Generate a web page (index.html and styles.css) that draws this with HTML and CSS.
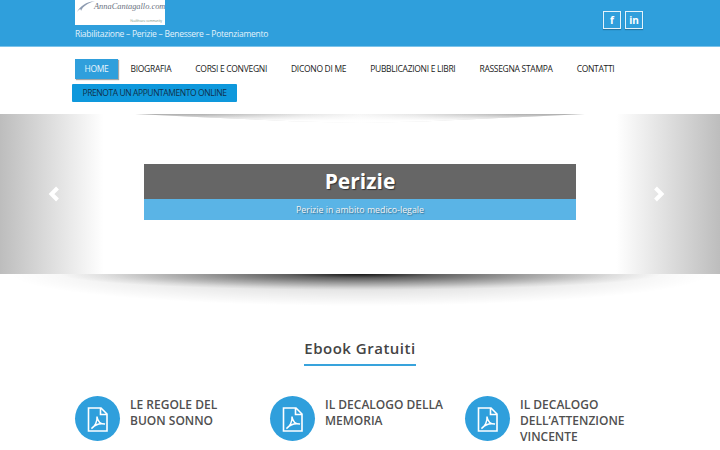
FILE: index.html
```html
<!DOCTYPE html>
<html lang="it">
<head>
  <meta charset="UTF-8">
  <meta name="viewport" content="width=device-width, initial-scale=1.0">
  <title>Anna Cantagallo</title>
  <link rel="stylesheet" href="styles.css">
</head>
<body>
  <!-- Top bar -->
  <header class="topbar">
    <div class="container topbar-inner">
      <div>
        <a class="logo" href="#">
          <svg class="logo-swoosh" width="20" height="13" viewBox="0 0 20 13">
            <path d="M1 12 C4 6 10 2 19 1 C12 3 7 6 5 11 C5 8 3 9 1 12 Z" fill="#8d9bb0"/>
          </svg>
          <span class="logo-name">AnnaCantagallo.com</span>
          <span class="logo-small">Healthcare community</span>
        </a>
        <p class="tagline">Riabilitazione – Perizie – Benessere – Potenziamento</p>
      </div>
      <div class="social">
        <a class="social-btn" href="#">f</a>
        <a class="social-btn" href="#">in</a>
      </div>
    </div>
  </header>

  <!-- Menu -->
  <nav class="container menu">
    <ul class="menu-list">
      <li><a class="menu-link active" href="#">Home</a></li>
      <li><a class="menu-link" href="#">Biografia</a></li>
      <li><a class="menu-link" href="#">Corsi e convegni</a></li>
      <li><a class="menu-link" href="#">Dicono di me</a></li>
      <li><a class="menu-link" href="#">Pubblicazioni e libri</a></li>
      <li><a class="menu-link" href="#">Rassegna stampa</a></li>
      <li><a class="menu-link" href="#">Contatti</a></li>
    </ul>
    <a class="booking" href="#">Prenota un appuntamento online</a>
  </nav>

  <!-- Slider -->
  <section class="slider">
    <div class="slider-control left">
      <svg width="12" height="16" viewBox="0 0 12 16"><polyline points="9.5,2 3.5,8 9.5,14" fill="none" stroke="#fff" stroke-width="4"/></svg>
    </div>
    <div class="caption">
      <h2 class="caption-title">Perizie</h2>
      <p class="caption-text">Perizie in ambito medico-legale</p>
    </div>
    <div class="slider-control right">
      <svg width="12" height="16" viewBox="0 0 12 16"><polyline points="2.5,2 8.5,8 2.5,14" fill="none" stroke="#fff" stroke-width="4"/></svg>
    </div>
  </section>

  <!-- Ebook -->
  <section class="container ebooks">
    <div class="section-head">
      <h2 class="section-title">Ebook Gratuiti</h2>
    </div>
    <div class="ebook-grid">
      <div class="ebook">
        <span class="ebook-icon">
          <svg width="24" height="26" viewBox="0 0 24 26"><use href="#pdf"/></svg>
        </span>
        <h3 class="ebook-title">Le regole del buon sonno</h3>
      </div>
      <div class="ebook">
        <span class="ebook-icon">
          <svg width="24" height="26" viewBox="0 0 24 26"><use href="#pdf"/></svg>
        </span>
        <h3 class="ebook-title">Il decalogo della memoria</h3>
      </div>
      <div class="ebook">
        <span class="ebook-icon">
          <svg width="24" height="26" viewBox="0 0 24 26"><use href="#pdf"/></svg>
        </span>
        <h3 class="ebook-title">Il decalogo dell’attenzione vincente</h3>
      </div>
    </div>
  </section>

  <svg class="sprite" width="0" height="0">
    <symbol id="pdf" viewBox="0 0 24 26">
      <path d="M2.5 2 H15 L21 8 V25 H2.5 Z M14.5 2 V8.5 H21" fill="none" stroke="#fff" stroke-width="1.6"/>
      <path d="M5.5 22.5 C9 20.5 11.5 15 11 10.5 C11.5 15 14 18 19 18 C14 17 9 18.5 5.5 22.5 Z" fill="none" stroke="#fff" stroke-width="1.5"/>
    </symbol>
  </svg>
</body>
</html>
```

FILE: styles.css
```css
html, body {
  height: 450px;
  overflow: hidden;
}

body {
  font-family: "Open Sans", sans-serif;
  color: #444;
  background-color: #ffffff;
  margin: 0;
  padding: 0;
}

.container {
  width: 570px;
  margin: 0 auto;
}

/* Top bar */
.topbar {
  height: 46px;
  background-color: #2f9fdc;
  border-bottom: 1px solid #7cc3ea;
}

.topbar-inner {
  display: flex;
  justify-content: space-between;
  align-items: flex-start;
}

.logo {
  position: relative;
  display: block;
  width: 90px;
  height: 25px;
  background: #ffffff;
  text-decoration: none;
  overflow: hidden;
}

.logo-swoosh {
  position: absolute;
  left: 1px;
  top: 0;
}

.logo-name {
  position: absolute;
  left: 19px;
  top: 1px;
  font-family: "Liberation Serif", serif;
  font-style: italic;
  font-size: 8.4px;
  line-height: 12px;
  color: #6b7280;
  white-space: nowrap;
}

.logo-small {
  position: absolute;
  right: 3px;
  top: 19px;
  font-size: 3px;
  line-height: 5px;
  color: #6f8a78;
  white-space: nowrap;
}

.tagline {
  margin: 3px 0 0;
  font-size: 8.5px;
  line-height: 12px;
  letter-spacing: -0.26px;
  color: #e2f2fb;
}

.social {
  display: flex;
  gap: 4px;
  margin: 11px 2px 0 0;
}

.social-btn {
  display: flex;
  align-items: center;
  justify-content: center;
  box-sizing: border-box;
  width: 18px;
  height: 18px;
  border: 1px solid #e4f3fb;
  box-shadow: 0 1px 1px rgba(0, 0, 0, 0.25);
  color: #ffffff;
  font-size: 10px;
  font-weight: 700;
  text-decoration: none;
}

/* Menu */
.menu {
  height: 67px;
  padding-top: 12px;
  box-sizing: border-box;
}

.menu-list {
  display: flex;
  margin: 0;
  padding: 0;
  list-style: none;
}

.menu-link {
  display: block;
  height: 20px;
  margin-right: 3px;
  padding: 0 10.5px;
  font-size: 8.5px;
  line-height: 20px;
  letter-spacing: -0.3px;
  color: #222;
  text-transform: uppercase;
  text-decoration: none;
  white-space: nowrap;
}

.menu-link.active {
  margin-right: 2px;
  padding: 0 9.5px;
  background-color: #2f9fdc;
  color: #e8f5fc;
  box-shadow: 1px 1px 1px rgba(0, 0, 0, 0.35);
}

.booking {
  display: block;
  width: 165px;
  height: 18px;
  margin: 5px 0 0 -3px;
  border-radius: 1px;
  background-color: #0e98dc;
  font-size: 8.5px;
  line-height: 18px;
  letter-spacing: -0.42px;
  text-align: center;
  text-transform: uppercase;
  text-decoration: none;
  color: #10304a;
}

/* Slider */
.slider {
  position: relative;
  display: flex;
  justify-content: center;
  height: 160px;
  padding-top: 50px;
  box-sizing: border-box;
}

/* thin crescent under the menu: dark at the tips, pale in the middle */
.slider::before {
  content: "";
  position: absolute;
  left: 135px;
  right: 135px;
  top: 0;
  height: 9px;
  clip-path: polygon(0 0, 100% 0, 85% 35%, 65% 80%, 50% 100%, 35% 80%, 15% 35%);
  background:
    linear-gradient(to bottom, rgba(255, 255, 255, 0), #ffffff 75%),
    linear-gradient(to right, #aaa, #b0b0b0 15%, #e6e6e6 38%, #f6f6f6 50%, #e6e6e6 62%, #b0b0b0 85%, #aaa);
}

.slider::after {
  content: "";
  position: absolute;
  left: 10px;
  right: 10px;
  top: 100%;
  height: 32px;
  background:
    radial-gradient(ellipse 300px 16px at 50% 0, rgba(0, 0, 0, 0.9) 0, rgba(0, 0, 0, 0.55) 25%, rgba(0, 0, 0, 0.3) 55%, rgba(0, 0, 0, 0.08) 85%, rgba(0, 0, 0, 0) 100%),
    radial-gradient(ellipse 350px 32px at 50% 0, rgba(0, 0, 0, 0.2) 0, rgba(0, 0, 0, 0.1) 50%, rgba(0, 0, 0, 0) 100%);
}

.slider-control {
  position: absolute;
  top: 0;
  bottom: 0;
  width: 108px;
  display: flex;
  align-items: center;
  justify-content: center;
  z-index: 1;
}

.slider-control.left {
  left: 0;
  background: linear-gradient(to right, #bdbdbd, #dcdcdc 45%, #ffffff 96%);
}

.slider-control.right {
  right: 0;
  box-sizing: border-box;
  padding-right: 14px;
  background: linear-gradient(to left, #bdbdbd, #dcdcdc 45%, #ffffff 96%);
}

.caption {
  width: 432px;
  text-align: center;
}

.caption-title {
  height: 35px;
  margin: 0;
  background-color: #666666;
  color: #ffffff;
  font-size: 21px;
  font-weight: 700;
  line-height: 35px;
  text-shadow: 1px 1px 1px rgba(0, 0, 0, 0.5);
}

.caption-text {
  height: 21px;
  margin: 0;
  background-color: #5ab4e6;
  color: #f2f2f2;
  font-size: 8.8px;
  line-height: 22px;
  text-shadow: 1px 1px 1px rgba(0, 0, 0, 0.35);
}

/* Ebook */
.ebooks {
  position: relative;
}

.section-head {
  display: flex;
  justify-content: center;
  padding-top: 64px;
}

.section-title {
  margin: 0;
  padding-bottom: 5px;
  border-bottom: 2px solid #38a3dc;
  color: #444;
  font-size: 15px;
  font-weight: 600;
  line-height: 21px;
  letter-spacing: 0.5px;
}

.ebook-grid {
  display: grid;
  grid-template-columns: repeat(3, 195px);
  margin-top: 30px;
}

.ebook {
  display: flex;
  gap: 10px;
  padding-right: 15px;
}

.ebook-icon {
  display: flex;
  flex: none;
  align-items: center;
  justify-content: center;
  width: 45px;
  height: 45px;
  border-radius: 50%;
  background-color: #2f9fdc;
}

.ebook-title {
  margin: 1px 0 0;
  color: #505050;
  font-size: 12px;
  font-weight: 600;
  line-height: 16px;
  text-transform: uppercase;
}

.sprite {
  position: absolute;
}
```
